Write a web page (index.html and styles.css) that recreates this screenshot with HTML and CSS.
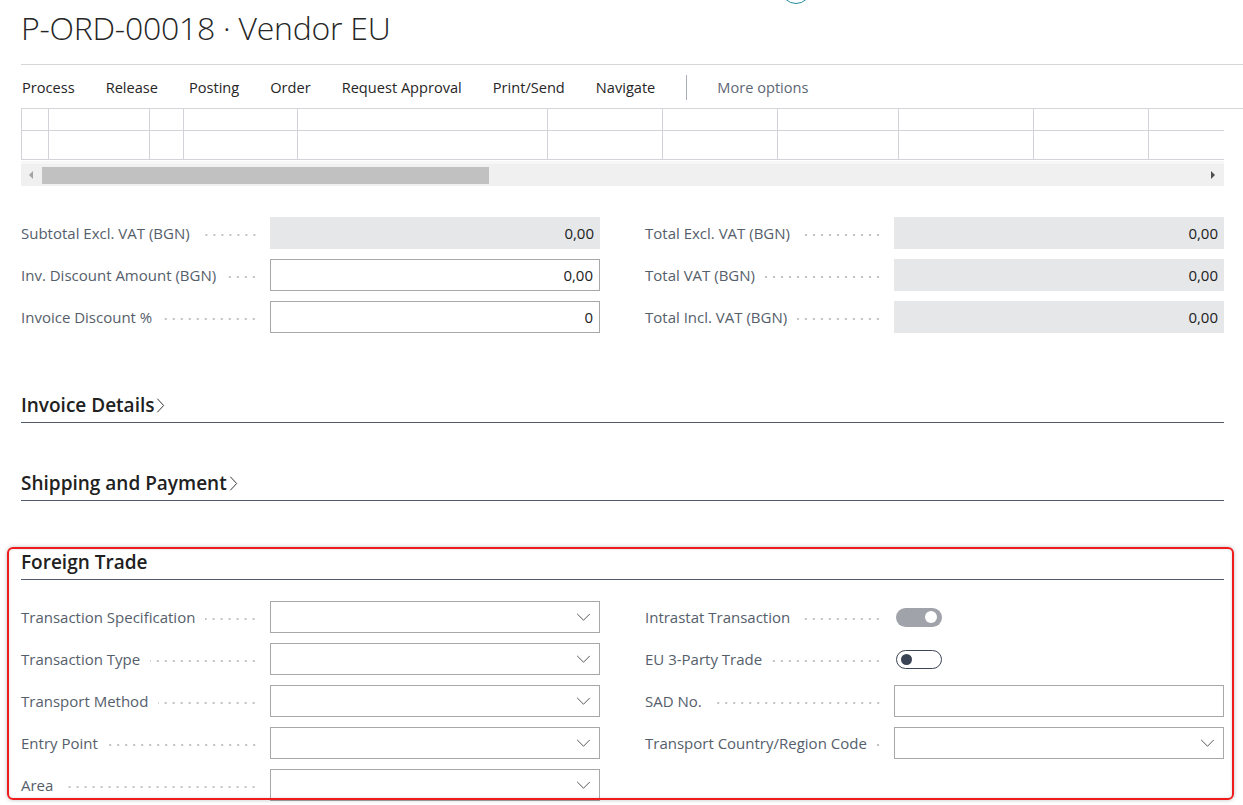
FILE: index.html
```html
<!DOCTYPE html>
<html lang="en">
<head>
<meta charset="utf-8">
<title>P-ORD-00018 · Vendor EU</title>
<link rel="stylesheet" href="styles.css">
</head>
<body>
<div class="page">
  <div class="top-circle"></div>
  <header class="title-bar">
    <h1 class="title">P-ORD-00018 · Vendor EU</h1>
  </header>
  <nav class="actions">
    <span class="action">Process</span>
    <span class="action">Release</span>
    <span class="action">Posting</span>
    <span class="action">Order</span>
    <span class="action">Request Approval</span>
    <span class="action">Print/Send</span>
    <span class="action">Navigate</span>
    <span class="action-sep"></span>
    <span class="action more">More options</span>
  </nav>

  <div class="lines">
    <div class="grid">
      <div class="grid-row head">
        <div class="c c1"></div><div class="c c2"></div><div class="c c3"></div><div class="c c4"></div><div class="c c5"></div><div class="c c6"></div><div class="c c7"></div><div class="c c8"></div><div class="c c9"></div><div class="c c10"></div><div class="c c11"></div>
      </div>
      <div class="grid-row body">
        <div class="c c1"></div><div class="c c2"></div><div class="c c3"></div><div class="c c4"></div><div class="c c5"></div><div class="c c6"></div><div class="c c7"></div><div class="c c8"></div><div class="c c9"></div><div class="c c10"></div><div class="c c11"></div>
      </div>
    </div>
    <div class="hscroll">
      <span class="arrow left"></span>
      <span class="thumb"></span>
      <span class="track"></span>
      <span class="arrow right"></span>
    </div>
  </div>

  <section class="totals two-col">
    <div class="col">
      <div class="field"><label class="lbl">Subtotal Excl. VAT (BGN)</label><div class="box ro">0,00</div></div>
      <div class="field"><label class="lbl">Inv. Discount Amount (BGN)</label><div class="box inp">0,00</div></div>
      <div class="field"><label class="lbl">Invoice Discount %</label><div class="box inp">0</div></div>
    </div>
    <div class="col">
      <div class="field"><label class="lbl">Total Excl. VAT (BGN)</label><div class="box ro">0,00</div></div>
      <div class="field"><label class="lbl">Total VAT (BGN)</label><div class="box ro">0,00</div></div>
      <div class="field"><label class="lbl">Total Incl. VAT (BGN)</label><div class="box ro">0,00</div></div>
    </div>
  </section>

  <section class="fasttab collapsed first">
    <h2 class="tab-head">Invoice Details<svg class="chev" viewBox="0 0 10 18" width="9" height="17"><path d="M1.5 1.5 L8.5 9 L1.5 16.5" fill="none" stroke="#333" stroke-width="1.1"/></svg></h2>
  </section>

  <section class="fasttab collapsed second">
    <h2 class="tab-head">Shipping and Payment<svg class="chev" viewBox="0 0 10 18" width="9" height="17"><path d="M1.5 1.5 L8.5 9 L1.5 16.5" fill="none" stroke="#333" stroke-width="1.1"/></svg></h2>
  </section>

  <section class="fasttab open">
    <div class="highlight"></div>
    <h2 class="tab-head">Foreign Trade</h2>
    <div class="tab-body two-col">
      <div class="col">
        <div class="field"><label class="lbl">Transaction Specification</label><div class="box inp dd"><svg class="dd-ico" viewBox="0 0 16 10" width="15" height="9"><path d="M1 1 L8 8 L15 1" fill="none" stroke="#555" stroke-width="1.1"/></svg></div></div>
        <div class="field"><label class="lbl">Transaction Type</label><div class="box inp dd"><svg class="dd-ico" viewBox="0 0 16 10" width="15" height="9"><path d="M1 1 L8 8 L15 1" fill="none" stroke="#555" stroke-width="1.1"/></svg></div></div>
        <div class="field"><label class="lbl">Transport Method</label><div class="box inp dd"><svg class="dd-ico" viewBox="0 0 16 10" width="15" height="9"><path d="M1 1 L8 8 L15 1" fill="none" stroke="#555" stroke-width="1.1"/></svg></div></div>
        <div class="field"><label class="lbl">Entry Point</label><div class="box inp dd"><svg class="dd-ico" viewBox="0 0 16 10" width="15" height="9"><path d="M1 1 L8 8 L15 1" fill="none" stroke="#555" stroke-width="1.1"/></svg></div></div>
        <div class="field"><label class="lbl">Area</label><div class="box inp dd"><svg class="dd-ico" viewBox="0 0 16 10" width="15" height="9"><path d="M1 1 L8 8 L15 1" fill="none" stroke="#555" stroke-width="1.1"/></svg></div></div>
      </div>
      <div class="col">
        <div class="field"><label class="lbl">Intrastat Transaction</label><div class="toggle-cell"><span class="toggle on"><span class="knob"></span></span></div></div>
        <div class="field"><label class="lbl">EU 3-Party Trade</label><div class="toggle-cell"><span class="toggle off"><span class="knob"></span></span></div></div>
        <div class="field"><label class="lbl">SAD No.</label><div class="box inp"></div></div>
        <div class="field"><label class="lbl">Transport Country/Region Code</label><div class="box inp dd"><svg class="dd-ico" viewBox="0 0 16 10" width="15" height="9"><path d="M1 1 L8 8 L15 1" fill="none" stroke="#555" stroke-width="1.1"/></svg></div></div>
      </div>
    </div>
  </section>
</div>
</body>
</html>
```
FILE: styles.css
```css
* { box-sizing: border-box; }
html, body { margin: 0; padding: 0; background: #fff; }
body {
  font-family: "Open Sans", "Noto Sans", "Liberation Sans", sans-serif;
  color: #212121;
  overflow: hidden;
  height: 805px;
}
.page {
  position: relative;
  padding-left: 21px;
}
.top-circle {
  position: absolute;
  left: 781px;
  top: -26px;
  width: 30px;
  height: 30px;
  border: 1.5px solid #1f8f97;
  border-radius: 50%;
}
.title-bar {
  height: 65px;
  border-bottom: 1px solid #d6d6da;
}
.title {
  margin: 0;
  padding-top: 7px;
  font-size: 32px;
  font-weight: 300;
  line-height: 42px;
  color: #262626;
  letter-spacing: -0.25px;
}
.actions {
  display: flex;
  align-items: center;
  height: 44px;
  border-bottom: 1px solid #d6d6da;
  font-size: 14.6px;
  padding-top: 1px;
}
.action {
  margin-right: 31px;
  color: #262626;
  white-space: nowrap;
}
.action:first-child { margin-left: 1px; }
.action-sep {
  width: 1px;
  height: 25px;
  background: #a9aeb6;
  margin-right: 30px;
}
.action.more { color: #5d6675; }

.lines { width: 1203px; }
.grid {
  border-left: 1px solid #d2d2d8;
}
.grid-row {
  display: flex;
  border-bottom: 1px solid #d2d2d8;
}
.grid-row.head { height: 22px; }
.grid-row.body { height: 29px; }
.c { border-right: 1px solid #d2d2d8; flex: none; }
.c1 { width: 27px; }
.c2 { width: 101px; }
.c3 { width: 34px; }
.c4 { width: 114px; }
.c5 { width: 250px; }
.c6 { width: 115px; }
.c7 { width: 115px; }
.c8 { width: 121px; }
.c9 { width: 135px; }
.c10 { width: 115px; }
.c11 { width: 76px; border-right: none; }

.hscroll {
  margin-top: 4px;
  height: 22px;
  background: #f0f0f0;
  display: flex;
  align-items: center;
  box-shadow: 0 -3px 0 #f7f7f8;
}
.arrow { width: 21px; height: 22px; position: relative; flex: none; }
.arrow::before {
  content: "";
  position: absolute;
  top: 7px;
  border-top: 4px solid transparent;
  border-bottom: 4px solid transparent;
}
.arrow.left::before { left: 8px; border-right: 4px solid #a3a3a3; }
.arrow.right::before { left: 8px; border-left: 4px solid #505050; }
.thumb {
  width: 447px;
  height: 17px;
  background: #c1c1c1;
  flex: none;
}
.track { flex: 1; }

.two-col {
  display: grid;
  grid-template-columns: 579px 579px;
  column-gap: 45px;
  width: 1203px;
}
.totals { margin-top: 31px; }
.col {
  display: flex;
  flex-direction: column;
  gap: 10px;
}
.field {
  display: flex;
  align-items: center;
  height: 32px;
}
.lbl {
  width: 249px;
  flex: none;
  display: flex;
  align-items: center;
  font-size: 15px;
  color: #555e6b;
  white-space: nowrap;
  padding-right: 12px;
}
.lbl::after {
  content: "";
  flex: 1;
  height: 4px;
  margin-left: 10px;
  margin-top: 3px;
  background-image: radial-gradient(circle at 50% 50%, #bfc3c9 0, #bfc3c9 0.9px, transparent 1.3px);
  background-size: 8px 4px;
  background-position: right center;
  background-repeat: repeat-x;
}
.box {
  flex: 1;
  height: 32px;
  display: flex;
  align-items: center;
  justify-content: flex-end;
  padding-right: 6px;
  font-size: 15px;
  color: #212121;
}
.box.ro { background: #e6e7e9; }
.box.inp { border: 1px solid #a8a8a8; background: #fff; }
.box.dd { padding-right: 8px; }
.dd-ico { display: block; }

.fasttab {
  position: relative;
  width: 1203px;
}
.fasttab.first { margin-top: 56px; }
.fasttab.second { margin-top: 44px; }
.fasttab.open { margin-top: 45px; }
.tab-head {
  margin: 0;
  height: 34px;
  display: flex;
  align-items: center;
  font-size: 19px;
  font-weight: 600;
  color: #212121;
  border-bottom: 1px solid #505c6d;
  padding-bottom: 2px;
}
.chev { margin-left: 2px; margin-top: 1px; }
.tab-body {
  margin-top: 21px;
}
.toggle-cell {
  flex: 1;
  display: flex;
  align-items: center;
  height: 32px;
  padding-left: 2px;
}
.toggle {
  width: 46px;
  height: 19px;
  border-radius: 10px;
  position: relative;
  display: block;
}
.toggle.on { background: #a0a3a9; }
.toggle.off { background: #fff; border: 1px solid #3b4454; }
.knob {
  position: absolute;
  width: 11px;
  height: 11px;
  border-radius: 50%;
  top: 4px;
}
.toggle.on .knob { background: #fff; right: 5px; width: 12px; height: 12px; top: 3.5px; }
.toggle.off .knob { background: #3b4454; left: 4px; top: 3px; }

.highlight {
  position: absolute;
  left: -14px;
  top: 1px;
  width: 1227px;
  height: 253px;
  border: 2px solid #ee1c1c;
  border-radius: 6px;
  box-shadow: 0 0 4px rgba(0,0,0,0.25), inset 0 0 3px rgba(0,0,0,0.15);
  pointer-events: none;
  z-index: 2;
}
```
